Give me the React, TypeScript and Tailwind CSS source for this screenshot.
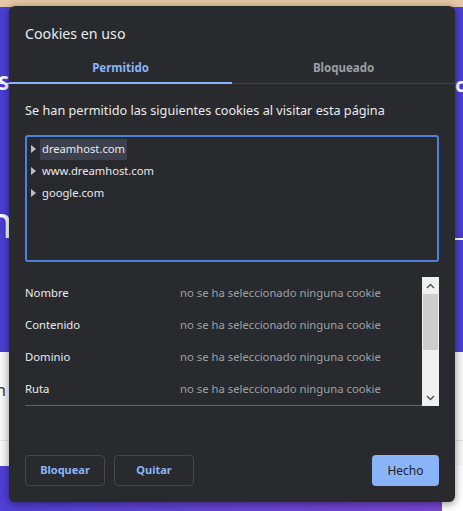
import React from "react";

const font = { fontFamily: '"Noto Sans", "Open Sans", Arial, sans-serif' };

function Triangle() {
  return (
    <svg width="6" height="8" viewBox="0 0 6 8" className="shrink-0">
      <path d="M0 0 L5 4 L0 8 Z" fill="#bdc1c6" />
    </svg>
  );
}

function Chevron({ up }: { up?: boolean }) {
  return (
    <svg width="9" height="6" viewBox="0 0 9 6">
      <path
        d={up ? "M1 5 L4.5 1.5 L8 5" : "M1 1 L4.5 4.5 L8 1"}
        stroke="#505050"
        strokeWidth="1.4"
        fill="none"
      />
    </svg>
  );
}

export default function App() {
  const sites = ["dreamhost.com", "www.dreamhost.com", "google.com"];
  const fields = ["Nombre", "Contenido", "Dominio", "Ruta"];
  return (
    <div className="relative w-[463px] h-[511px] overflow-hidden bg-white" style={font}>
      {/* page behind the dialog */}
      <div className="flex flex-col h-full">
        <div className="h-[7px] bg-[#e5c6a5]" />
        <div className="relative h-[345px] bg-[#4a3fd2]">
          <span className="absolute left-[-2px] top-[64px] text-[20px] leading-[24px] font-bold text-white">S</span>
          <span className="absolute left-[455px] top-[66px] text-[20px] leading-[24px] font-bold text-white">c</span>
          <div className="absolute left-0 top-[76px] w-[10px] h-px bg-white" />
          <span className="absolute left-[-14px] top-[192px] text-[44px] leading-none text-white">n</span>
          <div className="absolute left-[455px] top-[231px] w-[8px] h-[2px] bg-white" />
        </div>
        <div className="relative h-[114px] bg-[#f8f8f9]">
          <span className="absolute left-[-4px] top-[26px] text-[16px] text-[#333]">n</span>
          <div className="absolute left-0 right-0 top-[88px] h-px bg-[#e4e4e6]" />
        </div>
        <div className="flex flex-1">
          <div className="w-[442px] bg-gradient-to-r from-[#5040d4] to-[#7a46d6]" />
          <div className="flex-1 bg-white" />
        </div>
      </div>

      {/* dialog */}
      <div className="absolute left-[9px] top-[6px] w-[446px] h-[496px] rounded-[6px] bg-[#292a2d] shadow-[0_2px_8px_rgba(0,0,0,0.45)] flex flex-col px-4 pb-4">
        <div className="h-[50px] pt-[18px] text-[14.2px] leading-[20px] text-[#e8eaed]">Cookies en uso</div>

        <div className="-mx-4 flex h-[28px] border-b border-[#3f4145]">
          <div className="relative flex-1 flex justify-center pt-[3px] text-[11.5px] leading-[18px] font-bold text-[#8ab4f8]">
            Permitido
            <div className="absolute left-0 right-0 bottom-[-1px] h-[2px] bg-[#8ab4f8]" />
          </div>
          <div className="flex-1 flex justify-center pt-[3px] text-[11.5px] leading-[18px] font-bold text-[#9aa0a6]">
            Bloqueado
          </div>
        </div>

        <div className="mt-[16px] text-[12.7px] leading-[20px] text-[#e8eaed]">
          Se han permitido las siguientes cookies al visitar esta página
        </div>

        <div className="mt-[15px] h-[127px] rounded-[3px] border-2 border-[#4d7fdb] bg-[#28292c] pt-px flex flex-col">
          {sites.map((s, i) => (
            <div key={s} className="flex items-center h-[22px] pl-[4px]">
              <Triangle />
              <span
                className={
                  "ml-[3px] px-[2px] h-[21px] flex items-center text-[11.2px] text-[#e8eaed] " +
                  (i === 0 ? "bg-[#3d414e]" : "")
                }
              >
                {s}
              </span>
            </div>
          ))}
        </div>

        <div className="mt-[15px] h-[129px] flex">
          <div className="flex-1 flex flex-col border-b border-[#5f6368]">
            {fields.map((f) => (
              <div key={f} className="flex items-center h-[32px] text-[11.3px]">
                <span className="w-[155px] text-[#e8eaed]">{f}</span>
                <span className="text-[#9aa0a6]">no se ha seleccionado ninguna cookie</span>
              </div>
            ))}
          </div>
          <div className="w-[17px] bg-[#f0f0f0] flex flex-col items-center">
            <div className="h-[17px] flex items-center justify-center">
              <Chevron up />
            </div>
            <div className="w-[15px] h-[56px] bg-[#cdcdcd]" />
            <div className="flex-1" />
            <div className="h-[17px] flex items-center justify-center">
              <Chevron />
            </div>
          </div>
        </div>

        <div className="mt-auto flex items-center">
          <button className="w-[80px] h-[31px] rounded-[4px] border border-[#45474b] text-[11px] font-bold text-[#8ab4f8]">
            Bloquear
          </button>
          <button className="ml-[9px] w-[80px] h-[31px] rounded-[4px] border border-[#45474b] text-[11px] font-bold text-[#8ab4f8]">
            Quitar
          </button>
          <div className="flex-1" />
          <button className="w-[67px] h-[31px] rounded-[4px] bg-[#8ab4f8] text-[12px] text-[#202124]">
            Hecho
          </button>
        </div>
      </div>
    </div>
  );
}
